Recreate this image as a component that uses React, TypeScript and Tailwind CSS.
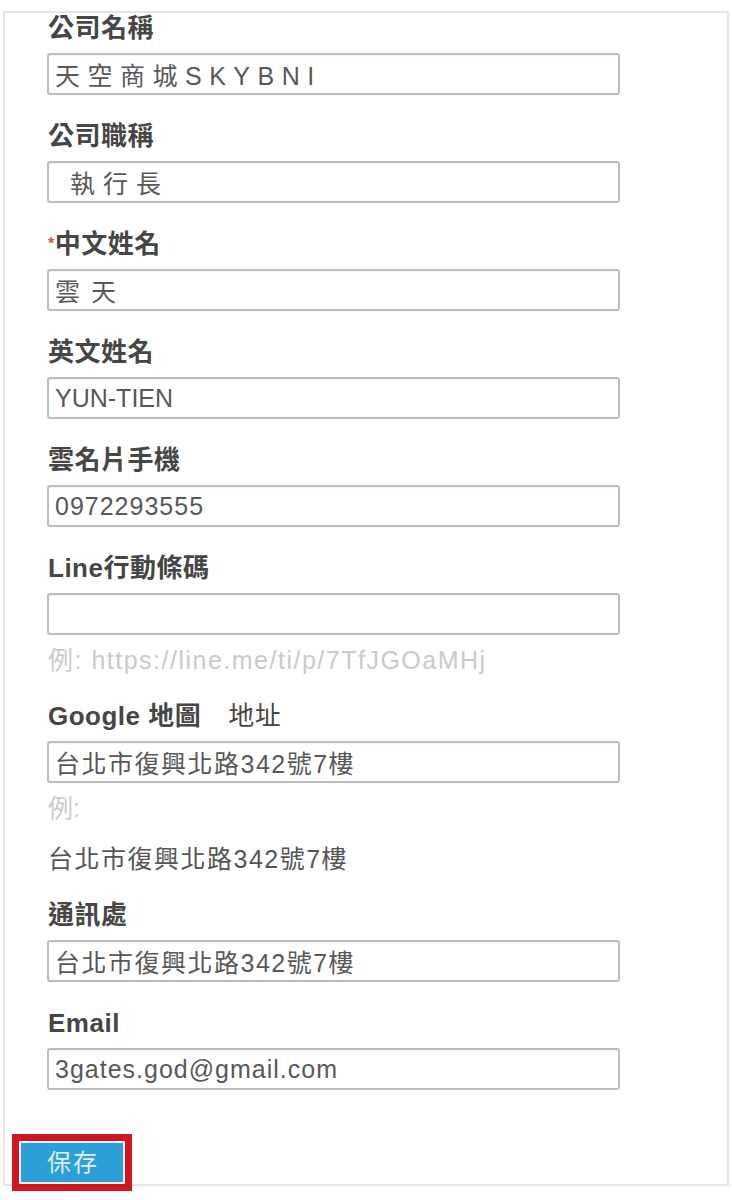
import React from "react";

const font = "font-['Liberation_Sans','Noto_Sans_CJK_TC',sans-serif]";

function Label({ children, className = "" }: { children: React.ReactNode; className?: string }) {
  return (
    <div className={`pl-[1px] text-[26px] leading-[30px] font-bold tracking-[0.5px] text-[#464646] ${className}`}>
      {children}
    </div>
  );
}

function Field({ value, tracking = "tracking-[1px]", className = "" }: { value: string; tracking?: string; className?: string }) {
  return (
    <input
      readOnly
      defaultValue={value}
      className={`block w-[573px] h-[42px] mt-[10px] px-[6px] border-2 border-[#bdbdbd] rounded-[3px] bg-white text-[25px] text-[#585858] outline-none shadow-[inset_0_1px_2px_rgba(0,0,0,0.06)] ${font} ${tracking} ${className}`}
    />
  );
}

export default function App() {
  return (
    <div className={`min-h-[1200px] bg-white pt-[11px] pl-[3px] pr-[3px] ${font}`}>
      <div className="border-2 border-[#e6e6e6] pl-[42px]">
        <Label>公司名稱</Label>
        <Field value="天空商城SKYBNI" tracking="tracking-[7.5px]" />

        <Label className="mt-[26px]">公司職稱</Label>
        <Field value=" 執行長" tracking="tracking-[8px]" />

        <Label className="mt-[26px]">
          <span className="text-[#c25a5a] text-[16px] align-top">*</span>中文姓名
        </Label>
        <Field value="雲 天" tracking="tracking-[2px]" />

        <Label className="mt-[26px]">英文姓名</Label>
        <Field value="YUN-TIEN" tracking="tracking-[0px]" />

        <Label className="mt-[26px]">雲名片手機</Label>
        <Field value="0972293555" />

        <Label className="mt-[26px]">Line行動條碼</Label>
        <Field value="" />
        <div className="mt-[10px] pl-[1px] text-[25px] leading-[30px] tracking-[1.5px] text-[#cacaca]">
          例: https://line.me/ti/p/7TfJGOaMHj
        </div>

        <Label className="mt-[26px] flex gap-[27px]">
          <span>Google 地圖</span>
          <span className="font-normal">地址</span>
        </Label>
        <Field value="台北市復興北路342號7樓" tracking="tracking-[1.5px]" />
        <div className="mt-[10px] pl-[1px] text-[25px] leading-[30px] text-[#cacaca]">例:</div>
        <div className="mt-[21px] pl-[1px] text-[25px] leading-[30px] tracking-[1.5px] text-[#555]">
          台北市復興北路342號7樓
        </div>

        <Label className="mt-[26px]">通訊處</Label>
        <Field value="台北市復興北路342號7樓" tracking="tracking-[1.5px]" />

        <Label className="mt-[26px]">Email</Label>
        <Field value="3gates.god@gmail.com" />

        <div className="mt-[44px] -ml-[35px] -mb-[7px] w-[120px] h-[57px] border-[7px] border-[#d0161f] p-[2px] bg-[#e6f3fa]">
          <button className="w-full h-full pl-[2px] bg-[#2c9fd7] text-[24px] leading-none tracking-[2px] text-[#dff1fa]">
            保存
          </button>
        </div>
      </div>
    </div>
  );
}
